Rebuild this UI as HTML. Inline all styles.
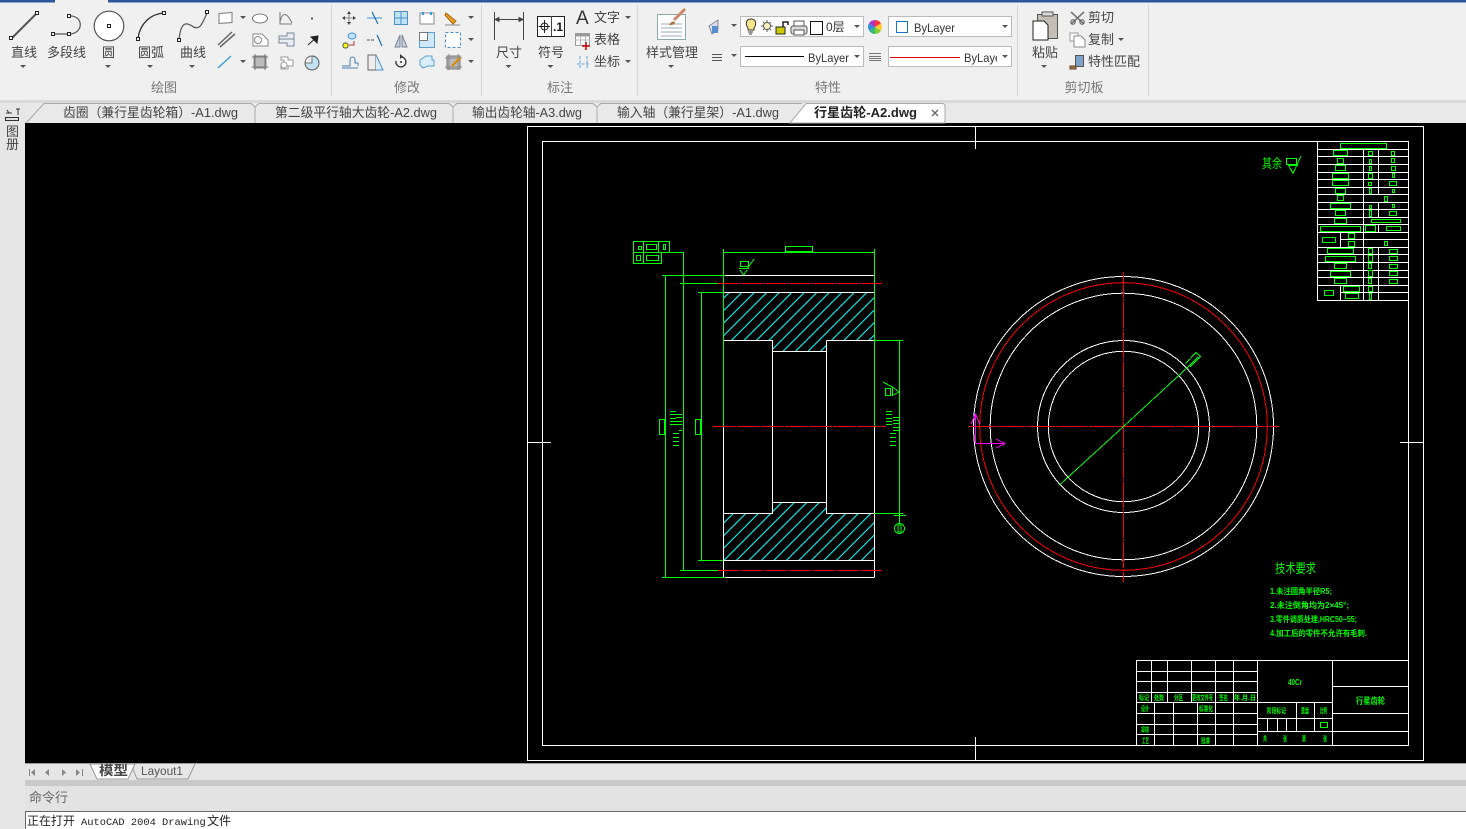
<!DOCTYPE html>
<html lang="zh"><head><meta charset="utf-8"><title>CAD</title>
<style>
html,body{margin:0;padding:0;background:#f0f0f0;overflow:hidden}
svg{display:block}
text{font-family:"Liberation Sans","Noto Sans CJK SC",sans-serif}
.l{font-size:13px;fill:#444;text-anchor:middle}
.g{font-size:13px;fill:#777;text-anchor:middle}
.t{font-size:13px;fill:#444}
.s{font-size:12px;fill:#333}
.c{shape-rendering:crispEdges}
.gt{fill:#0f0;font-size:7px;font-weight:bold}
</style></head><body>
<svg width="1466" height="829" viewBox="0 0 1466 829" xmlns="http://www.w3.org/2000/svg">
<defs>
<pattern id="h" patternUnits="userSpaceOnUse" width="12.5" height="12.5" patternTransform="translate(9.3 0)"><path d="M-1 13.5L13.5 -1M-1 1L1 -1M11.5 13.5L13.5 11.5" stroke="#0ff" stroke-width="1" fill="none" shape-rendering="crispEdges"/></pattern>
<path id="ar" d="M0 0h6l-3 3z" fill="#555"/>
<clipPath id="bl"><rect x="960" y="46" width="37" height="20"/></clipPath>
</defs>
<!-- chrome -->
<rect width="1466" height="829" fill="#f0f0f0"/>
<rect x="0" y="0" width="55" height="2.5" fill="#2b579a"/><rect x="108" y="0" width="1358" height="2.5" fill="#2b579a"/>
<rect y="100" width="1466" height="3" fill="#d9d9d9"/>
<rect y="103" width="1466" height="20" fill="#e9e9e9"/>
<rect y="103" width="25" height="726" fill="#e6e6e6"/>
<rect x="25" y="123" width="1441" height="640" fill="#000"/>
<path class="c" d="M331.500 5V96M481.500 5V96M637.500 5V96M1017.500 5V96M1148.500 5V96" stroke="#d5d5d5"/>
<!-- draw icons -->
<g fill="none" stroke="#555">
<path d="M11 39L37 13" stroke-width="2"/>
<rect x="9.500" y="36.500" width="3" height="3" fill="#fff" stroke="#222"/><rect x="35.500" y="11.500" width="3" height="3" fill="#fff" stroke="#222"/>
<path d="M53 34H69M69 16C84 15 84 34 69 34" stroke-width="1.200"/>
<rect x="51.500" y="32.500" width="3" height="3" fill="#fff" stroke="#222"/><rect x="67.500" y="32.500" width="3" height="3" fill="#fff" stroke="#222"/><rect x="67.500" y="14.500" width="3" height="3" fill="#fff" stroke="#222"/>
<circle cx="109" cy="26" r="14.800" fill="#fff" stroke-width="1.200"/><rect x="107.500" y="24.500" width="3" height="3" fill="#fff" stroke="#222"/>
<path d="M138 38C140 24 150 14 164 13" stroke-width="1.300" stroke="#333"/>
<rect x="136.500" y="37.500" width="3" height="3" fill="#fff" stroke="#222"/><rect x="162.500" y="11.500" width="3" height="3" fill="#fff" stroke="#222"/>
<path d="M179 39C181 22 186 22 192 26C200 32 203 22 207 13" stroke-width="1.200"/>
<rect x="177.500" y="38.500" width="3" height="3" fill="#fff" stroke="#222"/><rect x="205.500" y="10.500" width="3" height="3" fill="#fff" stroke="#222"/>
<!-- row icons -->
<path d="M219 13.500L232 12.500V22.500L219 23.500Z" fill="#fff" stroke="#777"/>
<ellipse cx="260" cy="18.500" rx="7.500" ry="4.500" fill="#fff" stroke="#777"/>
<path d="M280 12V24H292M280 22C283 9 288 15 292 23" stroke="#777"/>
<rect x="311" y="17.500" width="2" height="2" fill="#555" stroke="none"/>
<path d="M218 45L232 32M220 47L235 34" stroke="#666" stroke-width="1.500"/>
<path d="M253 34H262L268 40V46H253Z" fill="#fff" stroke="#888"/><circle cx="258" cy="40" r="3.500" stroke="#888"/>
<path d="M279 36H287V33H294V46H287V43H279ZM279 39H294" stroke="#789" fill="#e8eef4"/>
<path d="M308 45L318 36M311 37L318 36L317 43Z" stroke="#222" fill="#222"/>
<path d="M218 68L231 56" stroke="#39d" stroke-width="1.300"/>
<rect x="254" y="56" width="12" height="12" fill="#bbb" stroke="#888"/>
<path d="M252 57H268M252 67H268M255 54V70M265 54V70" stroke="#777"/>
<path d="M281 57H288V60H293V66H288V69H281V64H284V60H281Z" fill="#fff" stroke="#999"/><circle cx="284" cy="65" r="3" stroke="#999" fill="#fff"/>
<path d="M312 63V56A7 7 0 1 1 305 63Z" fill="#bfe3f5" stroke="#777"/><circle cx="312" cy="63" r="7" stroke="#666"/>
</g>
<use href="#ar" x="240" y="16"/><use href="#ar" x="240" y="60"/>
<!-- modify icons -->
<g fill="none" stroke="#666">
<path d="M343 18H355M349 12V24" stroke="#888"/><path d="M342 18l3-2v4zM356 18l-3-2v4zM349 11l-2 3h4zM349 25l-2-3h4z" fill="#444" stroke="none"/>
<path d="M367 18H382" stroke="#3a9ad9"/><path d="M372 12L378 24" stroke="#1a6fb0" stroke-width="1.200"/>
<rect x="394.500" y="11.500" width="13" height="13" fill="#bfe3f5" stroke="#4a90c8"/><path d="M401 11V25M394 18H408" stroke="#4a90c8"/>
<path d="M420 13H434V24H420Z" fill="#fff" stroke="#888"/><path d="M423 12v3M431 12v3" stroke="#39d" stroke-width="2"/>
<path d="M446 13L456 21L453 24L445 15Z" fill="#f0a030" stroke="#a60"/><path d="M445 25H460" stroke="#888"/>
<rect x="343" y="43" width="5" height="5" fill="#ff0" stroke="#555" rx="2"/><ellipse cx="352" cy="36" rx="4" ry="3" fill="#bfe3f5" stroke="#4a90c8"/><path d="M349 45H354V41" stroke="#b33"/>
<path d="M367 40H375" stroke="#555" stroke-dasharray="3 1"/><path d="M377 35L382 46" stroke="#1a6fb0" stroke-width="1.200"/>
<path d="M400 35V47H395ZM402 35V47H407Z" fill="#ccd" stroke="#789"/>
<rect x="419.500" y="32.500" width="15" height="15" fill="#cfe9fb" stroke="#5aa0d0"/><rect x="419.500" y="32.500" width="8" height="8" fill="#fff" stroke="#777"/>
<rect x="445.500" y="32.500" width="15" height="15" fill="#fff" stroke="#4a90c8" stroke-dasharray="3 2"/>
<path d="M342 66H350V60C350 56 355 56 355 60V63H358V66M342 68H358" stroke="#4a80b0"/>
<path d="M368 55H376V70H368Z" fill="#eee" stroke="#666"/><path d="M376 55L383 70H376" stroke="#4a90c8" fill="#d8eefb"/>
<path d="M396 61A5 5 0 1 0 400 57" stroke="#333" stroke-width="1.300"/><path d="M400 54v5l3-2.500z" fill="#333" stroke="none"/><circle cx="401" cy="62" r="1" fill="#333" stroke="none"/>
<path d="M420 60L426 56H432V60H434V66H428L423 68L420 65Z" fill="#d8eefb" stroke="#5aa0d0"/>
<rect x="447" y="56" width="13" height="13" fill="#bbb" stroke="#777"/><path d="M445 58H462M445 67H462M449 54V70M458 54V70" stroke="#888"/><path d="M452 66L460 58" stroke="#d80" stroke-width="2"/>
</g>
<use href="#ar" x="468" y="16"/><use href="#ar" x="468" y="38"/><use href="#ar" x="468" y="60"/>
<!-- annot -->
<g fill="none" stroke="#444">
<path class="c" d="M494.500 12V40M523.500 12V40M495 19.500H523"/><path d="M495 19.500l4-2v4zM523 19.500l-4-2v4z" fill="#444"/>
<rect class="c" x="537.500" y="16.500" width="27" height="20" stroke="#222" fill="#fff"/><path class="c" d="M551.500 16V36"/><circle cx="544.500" cy="26.500" r="3.500" stroke="#222"/><path class="c" d="M538.500 26.500H550M544.500 20V33" stroke="#222"/>
<rect class="c" x="575.500" y="33.500" width="14" height="12" fill="#fff" stroke="#999"/><rect x="575.500" y="33.500" width="14" height="3" fill="#999" stroke="none"/><path class="c" d="M575 40H590M580.500 36V46M585.500 36V46" stroke="#bbb"/><path d="M582 46H590M586 42V50" stroke="#c00" stroke-width="1.500"/>
<path d="M577 64H590M580 56V68M587 56V68" stroke="#6aa6d0" stroke-dasharray="3 1.500"/>
</g>
<text x="553" y="31" font-size="12" font-weight="bold" fill="#111">.1</text>
<text x="576" y="24" font-size="19" fill="#333">A</text>
<text class="t" x="594" y="22">文字</text><text class="t" x="594" y="44">表格</text><text class="t" x="594" y="66">坐标</text>
<use href="#ar" x="625" y="16"/><use href="#ar" x="625" y="60"/>
<!-- style -->
<g fill="none">
<rect class="c" x="657.500" y="14.500" width="28" height="25" fill="#fff" stroke="#8aa"/>
<path class="c" d="M661 24H682M661 28H682M661 32H682M661 36H682" stroke="#9ab"/>
<path d="M674 20L685 9" stroke="#c86" stroke-width="3"/><path d="M669 25C671 21 674 21 675 22C675 25 672 25 669 25Z" fill="#a74"/>
<path d="M709 26L718 20V30L712 34Z" fill="#dde" stroke="#889"/><rect x="712" y="26" width="6" height="7" fill="#5a8fd0"/>
</g>
<use href="#ar" x="731" y="24"/><use href="#ar" x="731" y="54"/>
<path class="c" d="M712 54.500H722M712 57.500H722M712 60.500H722" stroke="#555"/>
<path class="c" d="M869 53.500H881M869 56.500H881M869 58.500H881M869 60.500H881" stroke="#777"/>
<g class="c" fill="#fff" stroke="#bbb">
<rect x="740.500" y="16.500" width="123" height="20"/><rect x="888.500" y="16.500" width="123" height="20"/>
<rect x="740.500" y="46.500" width="123" height="20"/><rect x="888.500" y="46.500" width="123" height="20"/>
</g>
<g fill="none" stroke="#222">
<path d="M748 30V28C745 24 746 19 751 19C756 19 757 24 754 28V30Z" fill="#f8e58a" stroke="#333"/><path d="M748 32H753M749 34H752" stroke="#333"/>
<circle cx="767" cy="26" r="3.500" fill="#fff6c0" stroke="#555"/><path d="M767 20v2M767 30v2M761 26h2M771 26h2M763 22l1 1M770 29l1 1M771 22l-1 1M764 29l-1 1" stroke="#555"/>
<rect class="c" x="776" y="27" width="9" height="7" fill="#cc0" stroke="#222"/><path d="M783 27V22H788V25" stroke-width="1.500"/>
<rect x="791" y="26" width="16" height="8" rx="2" fill="#ddd" stroke="#555"/><rect x="794" y="21" width="10" height="5" fill="#fff" stroke="#555"/><rect x="794" y="30" width="10" height="5" fill="#fff" stroke="#555"/>
<rect class="c" x="810.500" y="21.500" width="12" height="13" fill="#fff" stroke="#111"/>
</g>
<text x="826" y="31" font-size="12" fill="#333">0层</text>
<use href="#ar" x="854" y="25"/><use href="#ar" x="1002" y="25"/><use href="#ar" x="854" y="55"/><use href="#ar" x="1002" y="55"/>
<g><path d="M875 27V20A7 7 0 0 1 881 23.500Z" fill="#f33"/><path d="M875 27L881 23.500A7 7 0 0 1 881 30.500Z" fill="#fc3"/><path d="M875 27L881 30.500A7 7 0 0 1 875 34Z" fill="#8c3"/><path d="M875 27V34A7 7 0 0 1 869 30.500Z" fill="#3b7"/><path d="M875 27L869 30.500A7 7 0 0 1 869 23.500Z" fill="#38d"/><path d="M875 27L869 23.500A7 7 0 0 1 875 20Z" fill="#a3c"/></g>
<rect class="c" x="896.500" y="21.500" width="11" height="11" fill="#fff" stroke="#1a73c8"/>
<text x="914" y="32" font-size="12" fill="#333" textLength="41" lengthAdjust="spacingAndGlyphs">ByLayer</text>
<path class="c" d="M745 56.500H804" stroke="#000"/><text x="808" y="62" font-size="12" fill="#333" textLength="41" lengthAdjust="spacingAndGlyphs">ByLayer</text>
<path class="c" d="M890 57.500H960" stroke="#d00"/>
<text x="964" y="62" font-size="12" fill="#333" textLength="41" lengthAdjust="spacingAndGlyphs" clip-path="url(#bl)">ByLayer</text>
<!-- clipboard -->
<g fill="none" stroke="#333">
<rect class="c" x="1037.500" y="14.500" width="20" height="24" fill="#c4bfb4" stroke="#555"/><rect class="c" x="1042" y="12" width="11" height="4" fill="#ddd" stroke="#555"/>
<path d="M1033 21H1044L1048 25V40H1033Z" fill="#fff" stroke="#222"/>
<path d="M1071 12L1084 24M1084 12L1071 24" stroke="#777" stroke-width="1.600"/><circle cx="1073" cy="22" r="2.200" stroke="#555"/><circle cx="1082" cy="22" r="2.200" stroke="#555"/>
<path d="M1070 33H1078V41H1070Z" fill="#fff" stroke="#999"/><path d="M1074 36H1081L1085 40V47H1074Z" fill="#fff" stroke="#888"/>
<rect class="c" x="1075.500" y="55.500" width="8" height="11" fill="#7ea2c8" stroke="#555"/><path d="M1070 66H1076V69H1070Z" fill="#975" stroke="#642"/>
</g>
<text class="t" x="1088" y="22">剪切</text><text class="t" x="1088" y="44">复制</text><text class="t" x="1088" y="66">特性匹配</text>
<use href="#ar" x="1118" y="38"/>
<!-- labels -->
<text class="l" x="24" y="57">直线</text><text class="l" x="66.500" y="57">多段线</text><text class="l" x="108.500" y="57">圆</text><text class="l" x="151" y="57">圆弧</text><text class="l" x="193" y="57">曲线</text>
<text class="l" x="509" y="57">尺寸</text><text class="l" x="551" y="57">符号</text><text class="l" x="672" y="57">样式管理</text><text class="l" x="1045" y="57">粘贴</text>
<use href="#ar" x="20" y="65"/><use href="#ar" x="105" y="65"/><use href="#ar" x="147" y="65"/><use href="#ar" x="189" y="65"/><use href="#ar" x="505.500" y="65"/><use href="#ar" x="547.500" y="65"/><use href="#ar" x="668" y="65"/><use href="#ar" x="1041" y="65"/>
<text class="g" x="164" y="92">绘图</text><text class="g" x="407" y="92">修改</text><text class="g" x="560" y="92">标注</text><text class="g" x="828" y="92">特性</text><text class="g" x="1084" y="92">剪切板</text>
<!-- tabs -->
<path d="M26 123L44 103.500H251L255 107V123M255 107L259 103.500H449L453 107V123M453 107L457 103.500H593L597 107V123M597 107L601 103.500H802" fill="none" stroke="#aaa"/>
<path d="M790 123L806 103.500H942Q945 103.500 945 106V123Z" fill="#fff" stroke="#aaa"/>
<text class="t" x="63" y="117" textLength="175" lengthAdjust="spacingAndGlyphs">齿圈（兼行星齿轮箱）-A1.dwg</text>
<text class="t" x="275" y="117" textLength="162" lengthAdjust="spacingAndGlyphs">第二级平行轴大齿轮-A2.dwg</text>
<text class="t" x="472" y="117" textLength="110" lengthAdjust="spacingAndGlyphs">输出齿轮轴-A3.dwg</text>
<text class="t" x="617" y="117" textLength="162" lengthAdjust="spacingAndGlyphs">输入轴（兼行星架）-A1.dwg</text>
<text class="t" x="814" y="117" font-weight="bold" textLength="103" lengthAdjust="spacingAndGlyphs" style="fill:#222">行星齿轮-A2.dwg</text>
<path d="M932 110L938 116M938 110L932 116" stroke="#666" stroke-width="1.300"/>
<!-- sidebar -->
<g fill="none" stroke="#333"><path d="M6 113H12M9 113L7 110M16 109H20M18 109V115"/><rect class="c" x="5.500" y="117.500" width="13" height="3" fill="#ddd"/></g>
<text x="6" y="136" font-size="13" fill="#444">图</text><text x="6" y="149" font-size="13" fill="#444">册</text>
<!-- DRAWING -->
<g class="c" fill="none" stroke="#fff">
<rect x="527.500" y="126.500" width="896" height="634"/>
<rect x="542.500" y="141.500" width="866" height="604"/>
<path d="M975.500 126V149M975.500 737V760M527 442.500H551M1400 442.500H1423"/>
</g>
<!-- section view -->
<path d="M723.500 292.500H874.500V340.500H826.500V351.500H772.500V340.500H723.500Z" fill="url(#h)"/>
<path d="M723.500 513.500H772.500V502.500H826.500V513.500H874.500V560.500H723.500Z" fill="url(#h)"/>
<g class="c" fill="none" stroke="#fff">
<path d="M723.500 275.500H874.500M723.500 292.500H874.500M723.500 577.500H874.500M723.500 560.500H874.500M723.500 426V577M874.500 426V577M723.500 340.500H772.500V513.500H723.500M826.500 340.500V513.500H874.500M874.500 340.500H826.500M772.500 351.500H826.500M772.500 502.500H826.500"/>
</g>
<g class="c" fill="none" stroke="#0f0">
<path d="M723.500 249V426M874.500 249V426M723.500 252.500H874.500"/>
<rect x="785.500" y="246.500" width="27" height="5"/>
<rect x="633.500" y="241.500" width="36" height="11"/><rect x="633.500" y="252.500" width="28" height="11"/>
<path d="M643.500 241V264M658.500 241V252M669 252.500H683.500V570.500M680 283.500H718M680 570.500H718"/>
<rect x="638.500" y="246.500" width="3" height="3"/><rect x="646.500" y="244.500" width="10" height="5"/><rect x="663.500" y="244.500" width="2" height="5"/><rect x="636.500" y="255.500" width="4" height="5"/><rect x="646.500" y="255.500" width="12" height="5"/>
<path d="M662 275.500H725M665.500 275V577M662 577.500H725M698 292.500H723M701.500 292V560M698 560.500H723"/>
<rect x="659.500" y="419.500" width="5" height="15"/><rect x="695.500" y="419.500" width="5" height="15"/>
<path d="M670 411.500H676M670 414.500H676M670 418.500H676M670 421.500H676M670 424.500H676M676 414.500H682M676 417.500H682M676 421.500H682M676 424.500H682M679 430.500H682M673 433.500H679M673 437.500H679M673 441.500H679M673 445.500H679"/>
<path d="M886 411.500H892M886 414.500H892M886 418.500H892M886 421.500H892M886 424.500H892M893 417.500H899M893 420.500H899M893 423.500H899M893 427.500H899M893 430.500H899M890 433.500H896M890 437.500H896M890 441.500H896M890 445.500H896"/>
<path d="M874 340.500H903M899.500 340V513M874 513.500H903M894 515.500H906M899.500 514V523"/>
<rect x="740.500" y="261.500" width="8" height="5"/>
<path d="M739 268.500H749M740 270L743.500 275L747 270"/>
<rect x="885.500" y="388.500" width="5" height="7"/><path d="M892.500 387V396"/>
</g>
<g class="c" fill="none" stroke="#0f0"><path d="M747 269L754 259M883 382L894 388L899 392L893 395"/><circle cx="899.500" cy="528.500" r="5"/><rect x="898" y="525" width="3" height="7"/></g>
<path class="c" d="M718 283.500H883M718 570.500H883M713 426.500H886" stroke="#f00" stroke-dasharray="20 1 2 1" fill="none"/>
<!-- circles -->
<g class="c" fill="none" stroke="#fff" stroke-width="1"><circle cx="1123.500" cy="426.500" r="150"/><circle cx="1123.500" cy="426.500" r="133.300"/><circle cx="1123.500" cy="426.500" r="86"/><circle cx="1123.500" cy="426.500" r="75.200"/></g>
<circle class="c" cx="1123.500" cy="426.500" r="143.800" fill="none" stroke="#f00" stroke-width="1"/>
<path class="c" d="M969 426.500H1279M1123.500 272V582" stroke="#f00" fill="none" stroke-dasharray="26 1 2 1"/>
<path class="c" d="M1059.500 485L1123.500 426.500L1189 366L1198 357M1185.500 363.500L1196 352.500L1200.500 356.500L1190 367" stroke="#0f0" fill="none"/>
<path class="c" d="M975.500 414V443.500H1005" stroke="#f0f" fill="none"/><path class="c" d="M971 424L975.500 414L980 424M996 439L1005 443.500L996 448" stroke="#f0f" fill="none"/>
<!-- top right -->
<g class="c" fill="none" stroke="#fff">
<path d="M1317.500 141V301M1317 149.500H1408M1317 156.500H1408M1317 164.500H1408M1317 172.500H1408M1317 179.500H1408M1317 187.500H1408M1317 194.500H1408M1317 202.500H1408M1317 209.500H1408M1317 217.500H1408M1317 224.500H1408M1317 232.500H1408M1340 239.500H1408M1317 247.500H1408M1317 254.500H1408M1317 262.500H1408M1317 270.500H1408M1317 277.500H1408M1317 285.500H1408M1340 292.500H1408M1317 300.500H1408"/>
<path d="M1363.500 149V300M1378.500 149V195M1378.500 202V217M1378.500 225V232M1378.500 247V300M1340.500 232V247M1340.500 285V300"/>
</g>
<g class="c" fill="none" stroke="#0f0">
<path d="M1340.500 143.500h46v5h-46zM1333.500 150.500h14v5h-14zM1368.500 151.500h4v4h-4zM1391.500 151.500h3v4h-3zM1337.500 158.500h6v5h-6zM1369.500 159.500h2v4h-2zM1391.500 158.500h3v4h-3zM1335.500 165.500h10v5h-10zM1369.500 166.500h2v4h-2zM1391.500 166.500h4v4h-4zM1332.500 173.500h16v5h-16zM1368.500 173.500h4v5h-4zM1392.500 173.500h2v4h-2zM1332.500 180.500h16v5h-16zM1368.500 182.500h3v3h-3zM1389.500 181.500h7v4h-7zM1335.500 188.500h10v5h-10zM1369.500 188.500h2v5h-2zM1392.500 189.500h2v3h-2zM1337.500 195.500h6v5h-6zM1384.500 196.500h3v5h-3zM1330.500 203.500h20v5h-20zM1369.500 205.500h2v3h-2zM1392.500 204.500h2v3h-2zM1335.500 210.500h10v5h-10zM1369.500 210.500h2v6h-2zM1389.500 211.500h7v4h-7zM1334.500 218.500h12v5h-12zM1371.500 219.500h29v3h-29zM1320.500 226.500h40v5h-40zM1365.500 225.500h10v6h-10zM1386.500 226.500h14v4h-14zM1348.500 233.500h6v5h-6zM1322.500 237.500h13v5h-13zM1348.500 241.500h6v5h-6zM1384.500 241.500h3v4h-3zM1327.500 248.500h26v5h-26zM1368.500 248.500h4v5h-4zM1389.500 249.500h8v4h-8zM1325.500 256.500h30v5h-30zM1368.500 255.500h4v6h-4zM1389.500 256.500h8v4h-8zM1334.500 263.500h12v5h-12zM1368.500 263.500h3v5h-3zM1389.500 264.500h8v4h-8zM1330.500 271.500h20v5h-20zM1368.500 270.500h4v6h-4zM1389.500 271.500h8v4h-8zM1334.500 278.500h12v5h-12zM1368.500 278.500h3v5h-3zM1389.500 279.500h8v4h-8zM1343.500 286.500h16v5h-16zM1368.500 286.500h4v5h-4zM1324.500 290.500h9v5h-9zM1345.500 293.500h13v5h-13zM1369.500 293.500h2v6h-2z"/>
<rect x="1286.500" y="158.500" width="10" height="6"/>
</g>
<path class="c" d="M1288 165.500H1298M1289 166L1293 173.500L1301 156" stroke="#0f0" fill="none"/>
<text x="1262" y="168" font-size="13" fill="#0f0" textLength="20" lengthAdjust="spacingAndGlyphs">其余</text>
<!-- notes -->
<text x="1275" y="573" font-size="13" fill="#0f0" textLength="41" lengthAdjust="spacingAndGlyphs">技术要求</text>
<text class="gt" x="1270" y="594" style="font-size:8px" textLength="62" lengthAdjust="spacingAndGlyphs">1.未注圆角半径R5;</text>
<text class="gt" x="1270" y="608" style="font-size:8px" textLength="79" lengthAdjust="spacingAndGlyphs">2.未注倒角均为2×45°;</text>
<text class="gt" x="1270" y="622" style="font-size:8px" textLength="87" lengthAdjust="spacingAndGlyphs">3.零件调质处理,HRC50~55;</text>
<text class="gt" x="1270" y="636" style="font-size:8px" textLength="97" lengthAdjust="spacingAndGlyphs">4.加工后的零件不允许有毛刺.</text>
<!-- title block -->
<g class="c" fill="none" stroke="#fff">
<rect x="1136.500" y="660.500" width="272" height="85"/>
<path d="M1136 671.500H1257M1136 681.500H1257M1136 692.500H1257M1136 702.500H1332M1136 713.500H1257M1136 724.500H1257M1136 734.500H1257M1151.500 660V702M1167.500 660V702M1191.500 660V702M1215.500 660V745M1233.500 660V745M1154.500 702V745M1173.500 702V745M1197.500 702V745M1257.500 660V745M1332.500 660V745M1257 718.500H1332M1257 731.500H1332M1296.500 702V731M1314.500 702V731M1267.500 718V731M1277.500 718V731M1286.500 718V731M1332 686.500H1408M1332 713.500H1408M1332 731.500H1408"/>
</g>
<rect class="c" x="1320.500" y="722.500" width="7" height="5" fill="none" stroke="#0f0"/>
<g class="gt">
<text x="1139" y="700" textLength="10" lengthAdjust="spacingAndGlyphs">标记</text><text x="1154" y="700" textLength="10" lengthAdjust="spacingAndGlyphs">处数</text><text x="1174" y="700" textLength="9" lengthAdjust="spacingAndGlyphs">分区</text><text x="1192" y="700" textLength="21" lengthAdjust="spacingAndGlyphs">更改文件号</text><text x="1219" y="700" textLength="9" lengthAdjust="spacingAndGlyphs">签名</text><text x="1234" y="700" textLength="22" lengthAdjust="spacingAndGlyphs">年.月.日</text>
<text x="1141" y="711" textLength="8" lengthAdjust="spacingAndGlyphs">设计</text><text x="1199" y="711" textLength="14" lengthAdjust="spacingAndGlyphs">标准化</text><text x="1141" y="732" textLength="8" lengthAdjust="spacingAndGlyphs">审核</text><text x="1142" y="743" textLength="7" lengthAdjust="spacingAndGlyphs">工艺</text><text x="1201" y="743" textLength="9" lengthAdjust="spacingAndGlyphs">批准</text>
<text x="1267" y="713" textLength="19" lengthAdjust="spacingAndGlyphs">阶段标记</text><text x="1301" y="713" textLength="8" lengthAdjust="spacingAndGlyphs">重量</text><text x="1320" y="713" textLength="7" lengthAdjust="spacingAndGlyphs">比例</text>
<text x="1263" y="741" textLength="4" lengthAdjust="spacingAndGlyphs">共</text><text x="1283" y="741" textLength="4" lengthAdjust="spacingAndGlyphs">张</text><text x="1302" y="741" textLength="4" lengthAdjust="spacingAndGlyphs">第</text><text x="1323" y="741" textLength="4" lengthAdjust="spacingAndGlyphs">张</text>
<text x="1288" y="685" textLength="14" lengthAdjust="spacingAndGlyphs" style="font-size:8px">40Cr</text>
<text x="1356" y="704" textLength="29" lengthAdjust="spacingAndGlyphs" style="font-size:9px">行星齿轮</text>
</g>
<!-- bottom -->
<rect x="25" y="763" width="1441" height="17" fill="#e6e6e6"/><path class="c" d="M25 763.500H1466" stroke="#999"/>
<rect x="25" y="780" width="1441" height="6" fill="#c9c9c9"/>
<rect x="25" y="786" width="1441" height="25" fill="#e3e3e3"/>
<rect x="25" y="811" width="1441" height="18" fill="#fff"/>
<path class="c" d="M25 811.500H1466M25.500 811V829" stroke="#666"/>
<g fill="#888"><path d="M29 769v7h1v-7zM35 769v7l-4-3.500z"/><path d="M49 769v7l-4-3.500z"/><path d="M62 769v7l4-3.500z"/><path d="M76 769v7l4-3.500zM82 769v7h1v-7z"/></g>
<path d="M131 764L137 779H188L195 764" fill="#e6e6e6" stroke="#999"/>
<path d="M90 764L97 779H128L135 764Z" fill="#fff" stroke="#999"/>
<text x="99" y="775" font-size="13" font-weight="bold" fill="#444" textLength="29" lengthAdjust="spacingAndGlyphs">模型</text>
<text x="141" y="775" font-size="12" fill="#555" textLength="42" lengthAdjust="spacingAndGlyphs">Layout1</text>
<text x="29" y="802" font-size="13" fill="#666">命令行</text>
<text x="27" y="825" font-size="12" fill="#222" textLength="48" lengthAdjust="spacingAndGlyphs">正在打开</text>
<text x="81" y="825" font-size="10.400" fill="#222" style="font-family:'Liberation Mono',monospace">AutoCAD 2004 Drawing</text>
<text x="207" y="825" font-size="12" fill="#222">文件</text>
</svg>
</body></html>
